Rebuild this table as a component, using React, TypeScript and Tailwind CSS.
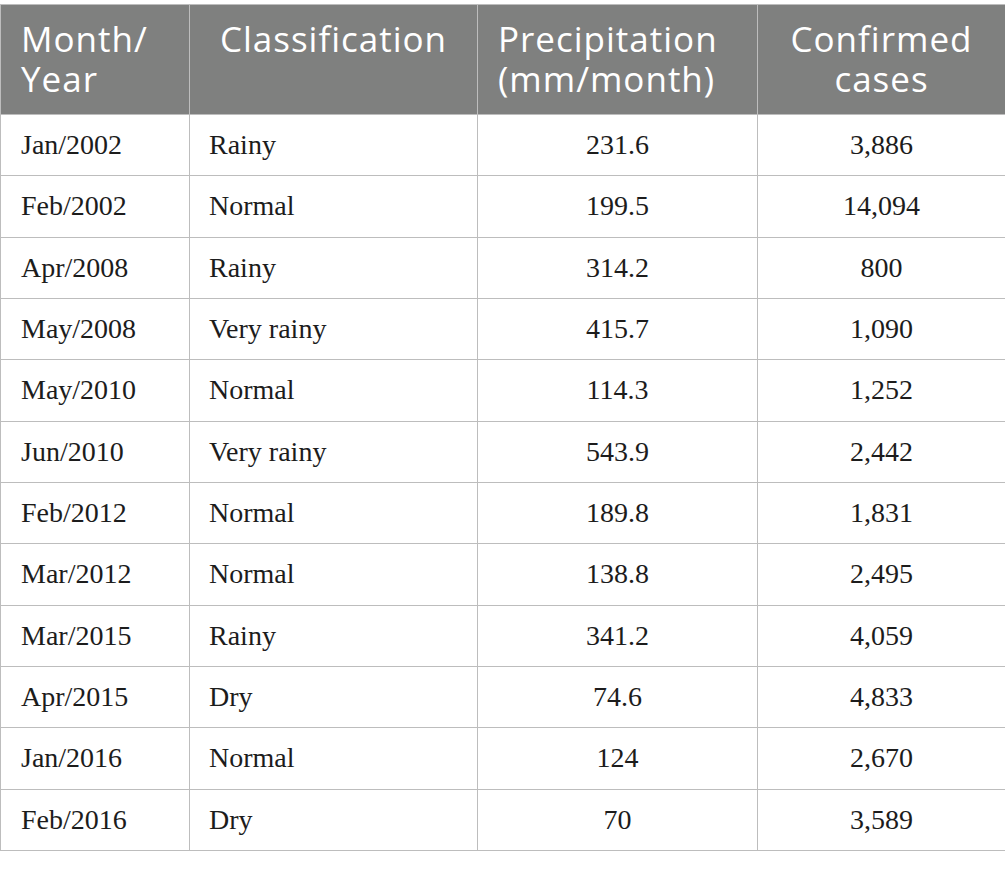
const rows: [string, string, string, string][] = [
  ["Jan/2002", "Rainy", "231.6", "3,886"],
  ["Feb/2002", "Normal", "199.5", "14,094"],
  ["Apr/2008", "Rainy", "314.2", "800"],
  ["May/2008", "Very rainy", "415.7", "1,090"],
  ["May/2010", "Normal", "114.3", "1,252"],
  ["Jun/2010", "Very rainy", "543.9", "2,442"],
  ["Feb/2012", "Normal", "189.8", "1,831"],
  ["Mar/2012", "Normal", "138.8", "2,495"],
  ["Mar/2015", "Rainy", "341.2", "4,059"],
  ["Apr/2015", "Dry", "74.6", "4,833"],
  ["Jan/2016", "Normal", "124", "2,670"],
  ["Feb/2016", "Dry", "70", "3,589"],
];

export default function App() {
  return (
    <div className="w-[1005px] h-[869px] bg-white pt-[4px]">
      <table className="w-[1005px] table-fixed border-collapse">
        <colgroup>
          <col className="w-[189px]" />
          <col className="w-[288px]" />
          <col className="w-[280px]" />
          <col className="w-[248px]" />
        </colgroup>
        <thead>
          <tr className="bg-[#7f807f] text-white font-['Open_Sans',sans-serif] text-[35px] leading-[40px] tracking-[1px] h-[110px]">
            <th className="border border-[#bdbdbd] align-top text-left font-normal pl-[20px] pt-[14px]">
              Month/
              <br />
              Year
            </th>
            <th className="border border-[#bdbdbd] align-top text-center font-normal pt-[14px]">
              Classification
            </th>
            <th className="border border-[#bdbdbd] align-top text-left font-normal pl-[20px] pt-[14px]">
              Precipitation
              <br />
              (mm/month)
            </th>
            <th className="border border-[#bdbdbd] align-top text-center font-normal pt-[14px]">
              Confirmed
              <br />
              cases
            </th>
          </tr>
        </thead>
        <tbody className="font-['Liberation_Serif',serif] text-[28px] text-[#1c1c1c]">
          {rows.map((r) => (
            <tr key={r[0]} className="h-[61.33px]">
              <td className="border border-[#bdbdbd] pl-[20px] align-middle">{r[0]}</td>
              <td className="border border-[#bdbdbd] pl-[19px] align-middle">{r[1]}</td>
              <td className="border border-[#bdbdbd] text-center align-middle">{r[2]}</td>
              <td className="border border-[#bdbdbd] text-center align-middle">{r[3]}</td>
            </tr>
          ))}
        </tbody>
      </table>
    </div>
  );
}
